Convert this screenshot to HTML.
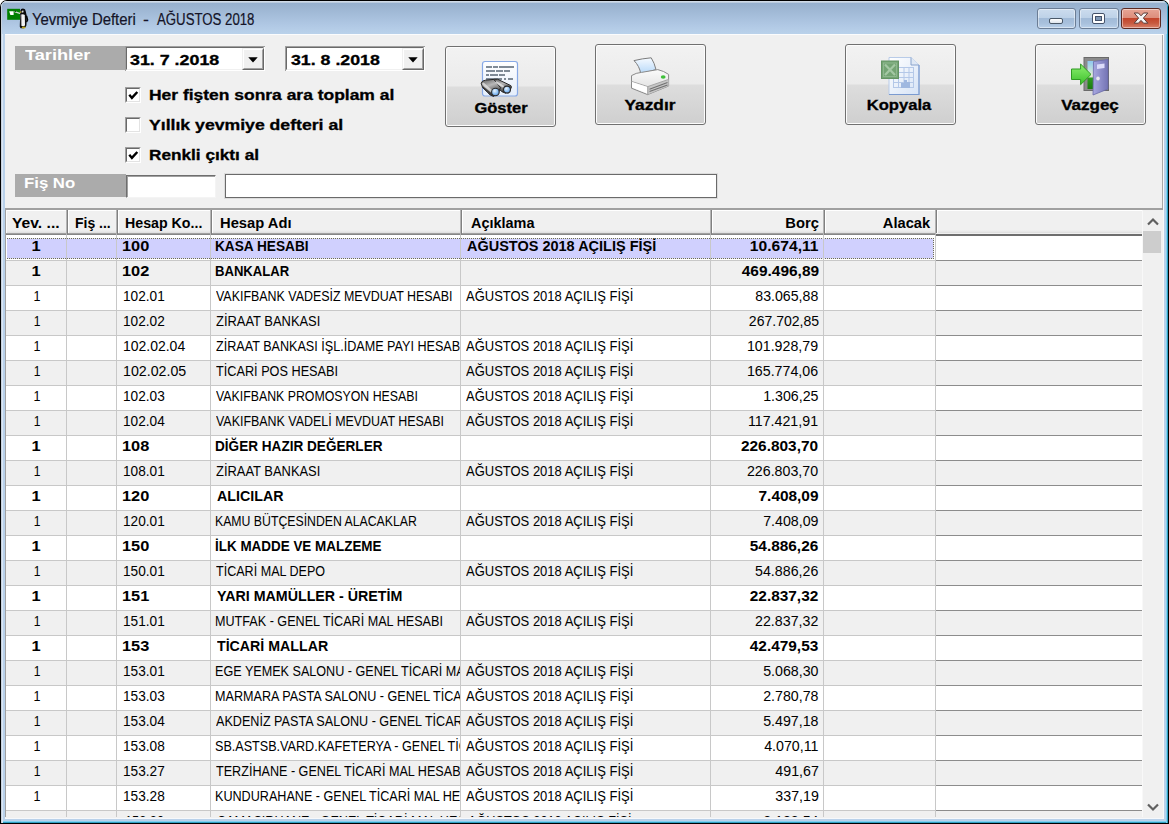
<!DOCTYPE html>
<html><head><meta charset="utf-8"><title>Yevmiye Defteri</title><style>
html,body{margin:0;padding:0}
body{width:1169px;height:824px;overflow:hidden;position:relative;background:#fff;font-family:"Liberation Sans",sans-serif}
.a{position:absolute}
.t{position:absolute;white-space:nowrap;line-height:20px;height:20px}
</style></head><body>
<div class="a" style="left:0px;top:0px;width:1169px;height:824px;background:#000;border-radius:7px 7px 0 0;"></div>
<div class="a" style="left:1px;top:1px;width:1167px;height:822px;background:#b9d1ea;border-radius:6px 6px 0 0;"></div>
<div class="a" style="left:1px;top:1px;width:1167px;height:822px;box-shadow:inset 1px 0 0 #c8d2de, inset 2px 0 0 #d9e6f5, inset -1px 0 0 #2f9fc3, inset -2px 0 0 #7fd0ef, inset 0 -1px 0 #2f9fc3, inset 0 -2px 0 #7fd0ef;border-radius:6px 6px 0 0;"></div>
<div class="a" style="left:2px;top:1px;width:1165px;height:33px;background:linear-gradient(#d3dde9 0px,#cdd9e6 1px,#97b1cf 2.5px,#9ab3d0 5px,#b0c8e4 24px,#b9d1ea 32px);border-radius:5px 5px 0 0;"></div>
<div class="a" style="left:5px;top:34px;width:1159px;height:784px;background:#f0f0f0;"></div>
<div class="a" style="left:5px;top:34px;width:1159px;height:1px;background:#fbfcfd;"></div>
<svg class="a" style="left:4px;top:6px" width="28" height="24" viewBox="0 0 28 24">
<rect x="3.2" y="2.8" width="12.8" height="11" fill="#008000"/>
<path d="M5.2 5.2 L9.6 5.2 L9.6 9 L6.4 9 Z" fill="#ffffff"/>
<path d="M10.5 5.6 L16.5 7.6" stroke="#cfd8cf" stroke-width="1.2"/>
<path d="M10.8 5.2 L12 5.6" stroke="#222" stroke-width="1"/>
<path d="M16.2 5 Q16.6 2.6 19 2.6 Q21.6 2.8 21.8 5.4 L22.4 8.2 Q23.4 10 22.8 13 L22.4 19.5 Q22 21.8 19.5 22.2 L16.6 22.2 Q15.4 21 15.8 19 L16.2 9.5 Z" fill="#0a0a0a"/>
<path d="M17.6 5.2 Q18.4 4 19.4 4.6 L19.6 6.2 L17.8 6.8 Z" fill="#d8d8d8"/>
<path d="M17.2 8.6 Q19.2 7.6 20.8 9 L21 19.6 Q19.2 20.6 17.4 19.8 Z" fill="#f2f2f2"/>
<path d="M17 9 L17.4 19.8" stroke="#9a9a9a" stroke-width="0.6"/>
<path d="M17.2 5.8 L16 6.4" stroke="#c8b420" stroke-width="1.2"/>
<path d="M22.6 10 L23.6 14 L22.6 16" stroke="#000" stroke-width="1.4" fill="none"/>
<ellipse cx="19.6" cy="21.4" rx="2" ry="1" fill="#b9a21e"/>
</svg>
<div class="t" style="font-size:16px;top:10px;color:#141428;-webkit-text-stroke:0.2px #141428;left:31.740000000000002px;transform-origin:0 0;transform:scaleX(0.9310);">Yevmiye Defteri</div>
<div class="t" style="font-size:16px;top:10px;color:#141428;-webkit-text-stroke:0.2px #141428;left:143.0px;transform-origin:0 0;transform:scaleX(1.1045);">-</div>
<div class="t" style="font-size:16px;top:10px;color:#141428;-webkit-text-stroke:0.2px #141428;left:156.54px;transform-origin:0 0;transform:scaleX(0.8261);">AĞUSTOS 2018</div>
<div class="a" style="left:1037px;top:8px;width:39px;height:21px;box-sizing:border-box;border:1px solid #6b7d95;border-radius:3px;background:linear-gradient(#ccdcee 0%,#bed2e8 45%,#a2bbd8 50%,#a8c0dc 75%,#b9d0ea 100%);box-shadow:inset 0 0 0 1px rgba(255,255,255,0.45)"></div>
<div class="a" style="left:1079px;top:8px;width:40px;height:21px;box-sizing:border-box;border:1px solid #6b7d95;border-radius:3px;background:linear-gradient(#ccdcee 0%,#bed2e8 45%,#a2bbd8 50%,#a8c0dc 75%,#b9d0ea 100%);box-shadow:inset 0 0 0 1px rgba(255,255,255,0.45)"></div>
<div class="a" style="left:1121px;top:8px;width:40px;height:21px;box-sizing:border-box;border:1px solid #5c2a22;border-radius:3px;background:linear-gradient(#e7a595 0%,#dd8f7c 45%,#c3452b 50%,#c75a40 75%,#d9816a 100%);box-shadow:inset 0 0 0 1px rgba(255,255,255,0.45)"></div>
<div class="a" style="left:1049px;top:18px;width:14px;height:6px;background:linear-gradient(#fff,#dfe6ee);border:1px solid #4a5868;border-radius:2px;box-sizing:border-box;"></div>
<div class="a" style="left:1092px;top:13px;width:13px;height:11px;background:#fff;border:1px solid #44526a;border-radius:2px;box-sizing:border-box;"></div>
<div class="a" style="left:1095px;top:16px;width:7px;height:5px;background:#8098b6;border:1px solid #44526a;box-sizing:border-box;"></div>
<svg class="a" style="left:1131px;top:10px" width="20" height="17" viewBox="0 0 20 17">
<path d="M3.2 3 L7.4 3 L10 5.8 L12.6 3 L16.8 3 L12.4 8.1 L16.8 13.2 L12.6 13.2 L10 10.4 L7.4 13.2 L3.2 13.2 L7.6 8.1 Z" fill="#f4f4f4" stroke="#5a3a36" stroke-width="1" stroke-linejoin="round"/>
</svg>
<div class="a" style="left:15px;top:46px;width:110px;height:24px;background:#ababab;"></div>
<div class="t" style="font-size:14px;top:45px;color:#fff;font-weight:bold;left:25.28px;transform-origin:0 0;transform:scaleX(1.2990);">Tarihler</div>
<div class="a" style="left:15px;top:174px;width:111px;height:23px;background:#ababab;"></div>
<div class="t" style="font-size:14px;top:173px;color:#fff;font-weight:bold;left:24.48px;transform-origin:0 0;transform:scaleX(1.1957);">Fiş No</div>
<div class="a" style="left:125px;top:46px;width:140px;height:25px;background:#fff;box-sizing:border-box;border-style:solid;border-width:2px;border-color:#8a8a8a #ffffff #ffffff #8a8a8a;"></div><div class="a" style="left:126px;top:47px;width:138px;height:23px;box-sizing:border-box;border-style:solid;border-width:1px;border-color:#6a6a6a #f0f0f0 #f0f0f0 #6a6a6a;"></div><div class="a" style="left:125px;top:46px;width:140px;height:1px;background:#a0a0a0;"></div><div class="a" style="left:125px;top:46px;width:1px;height:25px;background:#a0a0a0;"></div><div class="a" style="left:242px;top:48px;width:22px;height:22px;background:#f0f0f0;box-sizing:border-box;border-style:solid;border-width:1px;border-color:#f0f0f0 #696969 #696969 #f0f0f0;"></div><div class="a" style="left:243px;top:49px;width:20px;height:20px;box-sizing:border-box;border-style:solid;border-width:1px;border-color:#ffffff #a0a0a0 #a0a0a0 #ffffff;"></div><svg class="a" style="left:242px;top:48px" width="22" height="22"><path d="M6.3 9.2 L15.7 9.2 L11 14.6 Z" fill="#000"/></svg><div class="t" style="font-size:14px;top:50px;color:#000;font-weight:bold;-webkit-text-stroke:0.3px #000;left:130.28px;transform-origin:0 0;transform:scaleX(1.2736);">31. 7 .2018</div>
<div class="a" style="left:285px;top:46px;width:140px;height:25px;background:#fff;box-sizing:border-box;border-style:solid;border-width:2px;border-color:#8a8a8a #ffffff #ffffff #8a8a8a;"></div><div class="a" style="left:286px;top:47px;width:138px;height:23px;box-sizing:border-box;border-style:solid;border-width:1px;border-color:#6a6a6a #f0f0f0 #f0f0f0 #6a6a6a;"></div><div class="a" style="left:285px;top:46px;width:140px;height:1px;background:#a0a0a0;"></div><div class="a" style="left:285px;top:46px;width:1px;height:25px;background:#a0a0a0;"></div><div class="a" style="left:402px;top:48px;width:22px;height:22px;background:#f0f0f0;box-sizing:border-box;border-style:solid;border-width:1px;border-color:#f0f0f0 #696969 #696969 #f0f0f0;"></div><div class="a" style="left:403px;top:49px;width:20px;height:20px;box-sizing:border-box;border-style:solid;border-width:1px;border-color:#ffffff #a0a0a0 #a0a0a0 #ffffff;"></div><svg class="a" style="left:402px;top:48px" width="22" height="22"><path d="M6.3 9.2 L15.7 9.2 L11 14.6 Z" fill="#000"/></svg><div class="t" style="font-size:14px;top:50px;color:#000;font-weight:bold;-webkit-text-stroke:0.3px #000;left:290.52000000000004px;transform-origin:0 0;transform:scaleX(1.2678);">31. 8 .2018</div>
<div class="a" style="left:125px;top:87px;width:16px;height:16px;background:#fff;box-sizing:border-box;border-style:solid;border-width:1px;border-color:#a0a0a0 #ffffff #ffffff #a0a0a0;"></div><div class="a" style="left:126px;top:88px;width:14px;height:14px;box-sizing:border-box;border-style:solid;border-width:1px;border-color:#696969 #e3e3e3 #e3e3e3 #696969;"></div><svg class="a" style="left:125px;top:87px" width="16" height="16"><path d="M4.3 7.8 L6.9 10.9 L12.3 5.0" fill="none" stroke="#000" stroke-width="2.4"/></svg>
<div class="t" style="font-size:14px;top:85px;color:#000;font-weight:bold;-webkit-text-stroke:0.3px #000;left:149.2px;transform-origin:0 0;transform:scaleX(1.2460);">Her fişten sonra ara toplam al</div>
<div class="a" style="left:125px;top:117px;width:16px;height:16px;background:#fff;box-sizing:border-box;border-style:solid;border-width:1px;border-color:#a0a0a0 #ffffff #ffffff #a0a0a0;"></div><div class="a" style="left:126px;top:118px;width:14px;height:14px;box-sizing:border-box;border-style:solid;border-width:1px;border-color:#696969 #e3e3e3 #e3e3e3 #696969;"></div>
<div class="t" style="font-size:14px;top:115px;color:#000;font-weight:bold;-webkit-text-stroke:0.3px #000;left:149.2px;transform-origin:0 0;transform:scaleX(1.2598);">Yıllık yevmiye defteri al</div>
<div class="a" style="left:125px;top:147px;width:16px;height:16px;background:#fff;box-sizing:border-box;border-style:solid;border-width:1px;border-color:#a0a0a0 #ffffff #ffffff #a0a0a0;"></div><div class="a" style="left:126px;top:148px;width:14px;height:14px;box-sizing:border-box;border-style:solid;border-width:1px;border-color:#696969 #e3e3e3 #e3e3e3 #696969;"></div><svg class="a" style="left:125px;top:147px" width="16" height="16"><path d="M4.3 7.8 L6.9 10.9 L12.3 5.0" fill="none" stroke="#000" stroke-width="2.4"/></svg>
<div class="t" style="font-size:14px;top:145px;color:#000;font-weight:bold;-webkit-text-stroke:0.3px #000;left:149.2px;transform-origin:0 0;transform:scaleX(1.2291);">Renkli çıktı al</div>
<div class="a" style="left:126px;top:175px;width:90px;height:23px;background:#fff;box-sizing:border-box;border-style:solid;border-width:1px;border-color:#6e6e6e #f4f4f4 #f4f4f4 #6e6e6e;box-shadow:inset 1px 1px 0 #a0a0a0;"></div>
<div class="a" style="left:225px;top:174px;width:492px;height:24px;background:#fff;box-sizing:border-box;border:1px solid #6a6a6a;box-shadow:0 0 0 1px rgba(160,160,160,0.25);"></div>
<div class="a" style="left:445px;top:46px;width:111px;height:81px;box-sizing:border-box;border:1px solid #707070;border-radius:3px;background:linear-gradient(#f2f2f2 0%,#ebebeb 49%,#dddddd 51%,#cfcfcf 100%);box-shadow:inset 0 0 0 1px #fcfcfc;"></div><svg class="a" style="left:480px;top:59px" width="40" height="40" viewBox="0 0 40 40">
<defs><linearGradient id="gd" x1="0" y1="0" x2="0" y2="1"><stop offset="0" stop-color="#ffffff"/><stop offset="1" stop-color="#e4eefb"/></linearGradient>
<radialGradient id="ln" cx="0.4" cy="0.35" r="0.7"><stop offset="0" stop-color="#e8f4ff"/><stop offset="0.6" stop-color="#8cc0f4"/><stop offset="1" stop-color="#4f86d0"/></radialGradient>
<linearGradient id="bn2" x1="0" y1="0" x2="0.4" y2="1"><stop offset="0" stop-color="#5a5a5a"/><stop offset="0.45" stop-color="#b8b8b8"/><stop offset="1" stop-color="#3a3a3a"/></linearGradient></defs>
<rect x="2.5" y="2.5" width="35" height="34.5" rx="2.5" fill="url(#gd)" stroke="#87a9e6" stroke-width="1.2"/>
<g fill="#7f8a96"><rect x="6" y="7" width="6" height="2"/><rect x="13" y="7" width="5" height="2"/><rect x="19" y="7" width="15" height="2"/>
<rect x="6" y="11" width="9" height="2"/><rect x="16" y="11" width="7" height="2"/><rect x="24" y="11" width="6" height="2"/>
<rect x="6" y="15" width="3" height="2"/><rect x="10" y="15" width="8" height="2"/><rect x="19" y="15" width="6" height="2"/>
<rect x="6" y="19" width="16" height="2"/><rect x="24" y="19" width="2" height="2"/><rect x="28" y="19" width="5" height="2"/></g>
<path d="M12 21.6 Q14 19.6 17.5 20.2 L30.8 26.6 Q32.4 28 30.2 30.6 L25.6 34.2 Q21.5 33.2 19 30 Z" fill="url(#bn2)" stroke="#262626" stroke-width="1"/>
<path d="M1.2 24.2 Q1.8 21.6 5.5 21.2 L13.8 20.4 L20.5 28.6 L18.6 33.4 L13.6 37.4 Q10 36.8 7.6 33.4 L2.6 28.6 Z" fill="url(#bn2)" stroke="#262626" stroke-width="1"/>
<path d="M3.4 24.8 L13.4 33.8" stroke="#e0e0e0" stroke-width="2.4" stroke-linecap="round" opacity="0.8"/>
<path d="M16.4 23.4 L26.6 29.6" stroke="#e4e4e4" stroke-width="2.2" stroke-linecap="round" opacity="0.8"/>
<path d="M2.6 27.8 L12 36" stroke="#383838" stroke-width="1.4"/>
<circle cx="15.4" cy="33" r="3.8" fill="url(#ln)" stroke="#2a2a2a" stroke-width="1.1"/>
<circle cx="27" cy="30.6" r="3.5" fill="url(#ln)" stroke="#2a2a2a" stroke-width="1.1"/>
</svg><div class="t" style="font-size:14px;top:98px;color:#000;font-weight:bold;-webkit-text-stroke:0.3px #000;left:400.58px;width:200px;text-align:center;transform-origin:50% 0;transform:scaleX(1.1790);">Göster</div>
<div class="a" style="left:595px;top:44px;width:111px;height:81px;box-sizing:border-box;border:1px solid #707070;border-radius:3px;background:linear-gradient(#f2f2f2 0%,#ebebeb 49%,#dddddd 51%,#cfcfcf 100%);box-shadow:inset 0 0 0 1px #fcfcfc;"></div><svg class="a" style="left:628px;top:54px" width="44" height="44" viewBox="0 0 44 44">
<defs><linearGradient id="pp" x1="0" y1="0" x2="0" y2="1"><stop offset="0" stop-color="#f6faff"/><stop offset="1" stop-color="#b6d8f8"/></linearGradient>
<linearGradient id="pb" x1="0" y1="0" x2="0" y2="1"><stop offset="0" stop-color="#fbfbfb"/><stop offset="1" stop-color="#dadada"/></linearGradient></defs>
<path d="M6 6.6 Q14 4.6 23.2 3.8 Q26.5 9 28 15.6 L12.8 19.8 Q11.5 12 6 6.6 Z" fill="url(#pp)" stroke="#7c7c7c" stroke-width="1"/>
<path d="M3.5 21.6 Q8 18.8 13.4 18.4 L29.8 15.6 Q36 17 40.6 20.4 L40.6 32 L19.6 40.6 L3.5 34.2 Z" fill="url(#pb)" stroke="#8a8a8a" stroke-width="1"/>
<path d="M19.8 32.6 L40.6 25.4 L40.6 32 L19.8 40.4 Z" fill="#c6c6c6"/>
<path d="M3.5 27.4 L19.8 32.6 L40.6 25.4" stroke="#a6a6a6" stroke-width="1" fill="none"/>
<path d="M4 28 L19.4 33 L19.4 39.8 L4 33.6 Z" fill="#ffffff"/>
<path d="M21.5 35.2 L39.5 28.6 M21.5 37.6 L39.5 31" stroke="#707070" stroke-width="1.1"/>
<path d="M19.8 32.6 L19.8 40.5" stroke="#9a9a9a" stroke-width="1"/>
<ellipse cx="35.2" cy="23" rx="2.4" ry="1.7" fill="#3fc03a"/>
</svg><div class="t" style="font-size:14px;top:95px;color:#000;font-weight:bold;-webkit-text-stroke:0.3px #000;left:549.98px;width:200px;text-align:center;transform-origin:50% 0;transform:scaleX(1.2355);">Yazdır</div>
<div class="a" style="left:845px;top:44px;width:111px;height:81px;box-sizing:border-box;border:1px solid #707070;border-radius:3px;background:linear-gradient(#f2f2f2 0%,#ebebeb 49%,#dddddd 51%,#cfcfcf 100%);box-shadow:inset 0 0 0 1px #fcfcfc;"></div><svg class="a" style="left:878px;top:54px" width="44" height="44" viewBox="0 0 44 44">
<defs><linearGradient id="kd" x1="0" y1="0" x2="1" y2="1"><stop offset="0" stop-color="#ffffff"/><stop offset="1" stop-color="#d6e3f6"/></linearGradient></defs>
<path d="M11 3.5 L33 3.5 L41 11 L41 40.5 L11 40.5 Z" fill="url(#kd)" stroke="#b8cbe8" stroke-width="1"/>
<path d="M41 11 L41 40.5 L11 40.5" fill="none" stroke="#7b9bd0" stroke-width="1.2"/>
<path d="M33 3.5 L33 11 L41 11" fill="#dfe8f5" stroke="#8aa4cc" stroke-width="1"/>
<g stroke="#b4c8e8" stroke-width="1" fill="none">
<path d="M15 13.5 H36 M15 18.5 H36 M15 23.5 H36 M15 28.5 H36 M15 33.5 H36"/>
<path d="M15.5 13 V34 M20.5 13 V34 M26 13 V34 M31 13 V34 M35.5 13 V34"/></g>
<path d="M23 34 L23 29 L26 29 L26 26 L29 26 L29 28 L32 28 L32 34 Z" fill="#9fb8e0"/>
<rect x="3.5" y="7" width="17" height="17.5" fill="#74a474" stroke="#649464" stroke-width="1"/>
<path d="M7 10.5 L17 21 M17 10.5 L7 21" stroke="#a4c8a4" stroke-width="2.2"/>
<rect x="5.5" y="9" width="13" height="13.5" fill="none" stroke="#94bc94" stroke-width="0.8"/>
</svg><div class="t" style="font-size:14px;top:95px;color:#000;font-weight:bold;-webkit-text-stroke:0.3px #000;left:799.46px;width:200px;text-align:center;transform-origin:50% 0;transform:scaleX(1.1816);">Kopyala</div>
<div class="a" style="left:1035px;top:44px;width:111px;height:81px;box-sizing:border-box;border:1px solid #707070;border-radius:3px;background:linear-gradient(#f2f2f2 0%,#ebebeb 49%,#dddddd 51%,#cfcfcf 100%);box-shadow:inset 0 0 0 1px #fcfcfc;"></div><svg class="a" style="left:1068px;top:54px" width="44" height="44" viewBox="0 0 44 44">
<defs><linearGradient id="sky" x1="0" y1="0" x2="0" y2="1"><stop offset="0" stop-color="#8ec8f0"/><stop offset="0.55" stop-color="#e8f0d0"/><stop offset="0.62" stop-color="#2e9a20"/><stop offset="1" stop-color="#1c7a10"/></linearGradient>
<linearGradient id="dr" x1="0" y1="0" x2="1" y2="0"><stop offset="0" stop-color="#a8a8e0"/><stop offset="1" stop-color="#7474b4"/></linearGradient>
<linearGradient id="ar" x1="0" y1="0" x2="0" y2="1"><stop offset="0" stop-color="#8ef070"/><stop offset="1" stop-color="#3cc02c"/></linearGradient></defs>
<rect x="16" y="3.5" width="24.5" height="33" fill="#8a8a8a" stroke="#6a6a6a" stroke-width="1"/>
<rect x="19.5" y="7" width="8" height="28" fill="url(#sky)"/>
<path d="M25.5 7.5 L40 5.5 L40 35 L25 41 Z" fill="url(#dr)" stroke="#6a6aa8" stroke-width="0.8"/>
<path d="M29 10.5 L36.5 9.5 L36.5 14 L29 15 Z" fill="#dcdcfa"/>
<ellipse cx="30" cy="24.5" rx="1.8" ry="2" fill="#e8e8f0"/>
<path d="M3.5 15 L12.6 15 L12.6 10 L23 20.4 L12.6 30.7 L12.6 25.5 L3.5 25.5 Z" fill="url(#ar)" stroke="#2f9a22" stroke-width="1"/>
</svg><div class="t" style="font-size:14px;top:95px;color:#000;font-weight:bold;-webkit-text-stroke:0.3px #000;left:990.3800000000001px;width:200px;text-align:center;transform-origin:50% 0;transform:scaleX(1.2151);">Vazgeç</div>
<div class="a" style="left:5px;top:208px;width:1159px;height:610px;background:#f0f0f0;"></div>
<div class="a" style="left:0;top:0;width:1169px;height:824px;clip-path:inset(208px 6px 7px 5px)">
<div class="a" style="left:5px;top:208px;width:1159px;height:2px;background:#a0a0a0;"></div>
<div class="a" style="left:5px;top:208px;width:1px;height:610px;background:#a0a0a0;"></div>
<div class="a" style="left:6px;top:210px;width:1136px;height:23px;background:linear-gradient(#ffffff 0px,#ffffff 1px,#f0f0f0 1px,#f0f0f0 20px,#e6e6e6 22px,#dcdcdc 23px);"></div>
<div class="a" style="left:6px;top:210px;width:1px;height:23px;background:#fcfcfc;"></div>
<div class="a" style="left:6px;top:233px;width:930px;height:2px;background:linear-gradient(#a0a0a0 0px,#a0a0a0 1px,#858585 1px);"></div>
<div class="a" style="left:66px;top:210px;width:2px;height:25px;background:linear-gradient(90deg,#b4b4b4 0px,#b4b4b4 1px,#808080 1px);"></div>
<div class="a" style="left:68px;top:211px;width:1px;height:22px;background:#ffffff;"></div>
<div class="a" style="left:116px;top:210px;width:2px;height:25px;background:linear-gradient(90deg,#b4b4b4 0px,#b4b4b4 1px,#808080 1px);"></div>
<div class="a" style="left:118px;top:211px;width:1px;height:22px;background:#ffffff;"></div>
<div class="a" style="left:210px;top:210px;width:2px;height:25px;background:linear-gradient(90deg,#b4b4b4 0px,#b4b4b4 1px,#808080 1px);"></div>
<div class="a" style="left:212px;top:211px;width:1px;height:22px;background:#ffffff;"></div>
<div class="a" style="left:460px;top:210px;width:2px;height:25px;background:linear-gradient(90deg,#b4b4b4 0px,#b4b4b4 1px,#808080 1px);"></div>
<div class="a" style="left:462px;top:211px;width:1px;height:22px;background:#ffffff;"></div>
<div class="a" style="left:710px;top:210px;width:2px;height:25px;background:linear-gradient(90deg,#b4b4b4 0px,#b4b4b4 1px,#808080 1px);"></div>
<div class="a" style="left:712px;top:211px;width:1px;height:22px;background:#ffffff;"></div>
<div class="a" style="left:823px;top:210px;width:2px;height:25px;background:linear-gradient(90deg,#b4b4b4 0px,#b4b4b4 1px,#808080 1px);"></div>
<div class="a" style="left:825px;top:211px;width:1px;height:22px;background:#ffffff;"></div>
<div class="a" style="left:935px;top:210px;width:2px;height:25px;background:linear-gradient(90deg,#b4b4b4 0px,#b4b4b4 1px,#808080 1px);"></div>
<div class="a" style="left:937px;top:211px;width:1px;height:22px;background:#ffffff;"></div>
<div class="t" style="font-size:14px;top:213px;color:#000;font-weight:bold;left:11.940000000000001px;transform-origin:0 0;transform:scaleX(1.1182);">Yev. ...</div>
<div class="t" style="font-size:14px;top:213px;color:#000;font-weight:bold;left:75.12px;transform-origin:0 0;transform:scaleX(0.9965);">Fiş ...</div>
<div class="t" style="font-size:14px;top:213px;color:#000;font-weight:bold;left:125.47999999999999px;transform-origin:0 0;transform:scaleX(1.0148);">Hesap Ko...</div>
<div class="t" style="font-size:14px;top:213px;color:#000;font-weight:bold;left:219.56px;transform-origin:0 0;transform:scaleX(1.0526);">Hesap Adı</div>
<div class="t" style="font-size:14px;top:213px;color:#000;font-weight:bold;left:470.54px;transform-origin:0 0;transform:scaleX(1.0326);">Açıklama</div>
<div class="t" style="font-size:14px;top:213px;color:#000;font-weight:bold;right:350.5px;transform-origin:100% 0;transform:scaleX(1.0515);">Borç</div>
<div class="t" style="font-size:14px;top:213px;color:#000;font-weight:bold;right:238.5px;transform-origin:100% 0;transform:scaleX(1.0477);">Alacak</div>
<div class="a" style="left:6px;top:235px;width:1136px;height:25px;background:#ffffff;"></div>
<div class="a" style="left:7px;top:239px;width:926px;height:19px;background:#d0d0fe;"></div>
<div class="a" style="left:7px;top:238px;width:927px;height:1px;background:repeating-linear-gradient(90deg,#6a6a5a 0px,#6a6a5a 1px,#e8e8f0 1px,#e8e8f0 2px);"></div>
<div class="a" style="left:7px;top:258px;width:927px;height:1px;background:repeating-linear-gradient(90deg,#6a6a5a 0px,#6a6a5a 1px,#e8e8f0 1px,#e8e8f0 2px);"></div>
<div class="a" style="left:933px;top:238px;width:1px;height:21px;background:repeating-linear-gradient(180deg,#6a6a5a 0px,#6a6a5a 1px,#e8e8f0 1px,#e8e8f0 2px);"></div>
<div class="a" style="left:6px;top:260px;width:930px;height:1px;background:#c8c8c8;"></div>
<div class="a" style="left:936px;top:260px;width:206px;height:2px;background:#8c8c8c;"></div>
<div class="a" style="left:6px;top:261px;width:1136px;height:24px;background:#f0f0f0;"></div>
<div class="a" style="left:6px;top:285px;width:930px;height:1px;background:#c8c8c8;"></div>
<div class="a" style="left:936px;top:285px;width:206px;height:2px;background:#8c8c8c;"></div>
<div class="a" style="left:6px;top:286px;width:1136px;height:24px;background:#ffffff;"></div>
<div class="a" style="left:6px;top:310px;width:930px;height:1px;background:#c8c8c8;"></div>
<div class="a" style="left:936px;top:310px;width:206px;height:2px;background:#8c8c8c;"></div>
<div class="a" style="left:6px;top:311px;width:1136px;height:24px;background:#f0f0f0;"></div>
<div class="a" style="left:6px;top:335px;width:930px;height:1px;background:#c8c8c8;"></div>
<div class="a" style="left:936px;top:335px;width:206px;height:2px;background:#8c8c8c;"></div>
<div class="a" style="left:6px;top:336px;width:1136px;height:24px;background:#ffffff;"></div>
<div class="a" style="left:6px;top:360px;width:930px;height:1px;background:#c8c8c8;"></div>
<div class="a" style="left:936px;top:360px;width:206px;height:2px;background:#8c8c8c;"></div>
<div class="a" style="left:6px;top:361px;width:1136px;height:24px;background:#f0f0f0;"></div>
<div class="a" style="left:6px;top:385px;width:930px;height:1px;background:#c8c8c8;"></div>
<div class="a" style="left:936px;top:385px;width:206px;height:2px;background:#8c8c8c;"></div>
<div class="a" style="left:6px;top:386px;width:1136px;height:24px;background:#ffffff;"></div>
<div class="a" style="left:6px;top:410px;width:930px;height:1px;background:#c8c8c8;"></div>
<div class="a" style="left:936px;top:410px;width:206px;height:2px;background:#8c8c8c;"></div>
<div class="a" style="left:6px;top:411px;width:1136px;height:24px;background:#f0f0f0;"></div>
<div class="a" style="left:6px;top:435px;width:930px;height:1px;background:#c8c8c8;"></div>
<div class="a" style="left:936px;top:435px;width:206px;height:2px;background:#8c8c8c;"></div>
<div class="a" style="left:6px;top:436px;width:1136px;height:24px;background:#ffffff;"></div>
<div class="a" style="left:6px;top:460px;width:930px;height:1px;background:#c8c8c8;"></div>
<div class="a" style="left:936px;top:460px;width:206px;height:2px;background:#8c8c8c;"></div>
<div class="a" style="left:6px;top:461px;width:1136px;height:24px;background:#f0f0f0;"></div>
<div class="a" style="left:6px;top:485px;width:930px;height:1px;background:#c8c8c8;"></div>
<div class="a" style="left:936px;top:485px;width:206px;height:2px;background:#8c8c8c;"></div>
<div class="a" style="left:6px;top:486px;width:1136px;height:24px;background:#ffffff;"></div>
<div class="a" style="left:6px;top:510px;width:930px;height:1px;background:#c8c8c8;"></div>
<div class="a" style="left:936px;top:510px;width:206px;height:2px;background:#8c8c8c;"></div>
<div class="a" style="left:6px;top:511px;width:1136px;height:24px;background:#f0f0f0;"></div>
<div class="a" style="left:6px;top:535px;width:930px;height:1px;background:#c8c8c8;"></div>
<div class="a" style="left:936px;top:535px;width:206px;height:2px;background:#8c8c8c;"></div>
<div class="a" style="left:6px;top:536px;width:1136px;height:24px;background:#ffffff;"></div>
<div class="a" style="left:6px;top:560px;width:930px;height:1px;background:#c8c8c8;"></div>
<div class="a" style="left:936px;top:560px;width:206px;height:2px;background:#8c8c8c;"></div>
<div class="a" style="left:6px;top:561px;width:1136px;height:24px;background:#f0f0f0;"></div>
<div class="a" style="left:6px;top:585px;width:930px;height:1px;background:#c8c8c8;"></div>
<div class="a" style="left:936px;top:585px;width:206px;height:2px;background:#8c8c8c;"></div>
<div class="a" style="left:6px;top:586px;width:1136px;height:24px;background:#ffffff;"></div>
<div class="a" style="left:6px;top:610px;width:930px;height:1px;background:#c8c8c8;"></div>
<div class="a" style="left:936px;top:610px;width:206px;height:2px;background:#8c8c8c;"></div>
<div class="a" style="left:6px;top:611px;width:1136px;height:24px;background:#f0f0f0;"></div>
<div class="a" style="left:6px;top:635px;width:930px;height:1px;background:#c8c8c8;"></div>
<div class="a" style="left:936px;top:635px;width:206px;height:2px;background:#8c8c8c;"></div>
<div class="a" style="left:6px;top:636px;width:1136px;height:24px;background:#ffffff;"></div>
<div class="a" style="left:6px;top:660px;width:930px;height:1px;background:#c8c8c8;"></div>
<div class="a" style="left:936px;top:660px;width:206px;height:2px;background:#8c8c8c;"></div>
<div class="a" style="left:6px;top:661px;width:1136px;height:24px;background:#f0f0f0;"></div>
<div class="a" style="left:6px;top:685px;width:930px;height:1px;background:#c8c8c8;"></div>
<div class="a" style="left:936px;top:685px;width:206px;height:2px;background:#8c8c8c;"></div>
<div class="a" style="left:6px;top:686px;width:1136px;height:24px;background:#ffffff;"></div>
<div class="a" style="left:6px;top:710px;width:930px;height:1px;background:#c8c8c8;"></div>
<div class="a" style="left:936px;top:710px;width:206px;height:2px;background:#8c8c8c;"></div>
<div class="a" style="left:6px;top:711px;width:1136px;height:24px;background:#f0f0f0;"></div>
<div class="a" style="left:6px;top:735px;width:930px;height:1px;background:#c8c8c8;"></div>
<div class="a" style="left:936px;top:735px;width:206px;height:2px;background:#8c8c8c;"></div>
<div class="a" style="left:6px;top:736px;width:1136px;height:24px;background:#ffffff;"></div>
<div class="a" style="left:6px;top:760px;width:930px;height:1px;background:#c8c8c8;"></div>
<div class="a" style="left:936px;top:760px;width:206px;height:2px;background:#8c8c8c;"></div>
<div class="a" style="left:6px;top:761px;width:1136px;height:24px;background:#f0f0f0;"></div>
<div class="a" style="left:6px;top:785px;width:930px;height:1px;background:#c8c8c8;"></div>
<div class="a" style="left:936px;top:785px;width:206px;height:2px;background:#8c8c8c;"></div>
<div class="a" style="left:6px;top:786px;width:1136px;height:24px;background:#ffffff;"></div>
<div class="a" style="left:6px;top:810px;width:930px;height:1px;background:#c8c8c8;"></div>
<div class="a" style="left:936px;top:810px;width:206px;height:2px;background:#8c8c8c;"></div>
<div class="a" style="left:6px;top:811px;width:1136px;height:24px;background:#f0f0f0;"></div>
<div class="a" style="left:6px;top:835px;width:930px;height:1px;background:#c8c8c8;"></div>
<div class="a" style="left:936px;top:835px;width:206px;height:2px;background:#8c8c8c;"></div>
<div class="a" style="left:936px;top:233px;width:206px;height:1px;background:#f0f0f0;"></div>
<div class="a" style="left:936px;top:234px;width:206px;height:2px;background:#6e6e6e;"></div>
<div class="a" style="left:66px;top:235px;width:1px;height:583px;background:#c8c8c8;"></div>
<div class="a" style="left:116px;top:235px;width:1px;height:583px;background:#c8c8c8;"></div>
<div class="a" style="left:210px;top:235px;width:1px;height:583px;background:#c8c8c8;"></div>
<div class="a" style="left:460px;top:235px;width:1px;height:583px;background:#c8c8c8;"></div>
<div class="a" style="left:710px;top:235px;width:1px;height:583px;background:#c8c8c8;"></div>
<div class="a" style="left:823px;top:235px;width:1px;height:583px;background:#c8c8c8;"></div>
<div class="a" style="left:935px;top:235px;width:1px;height:583px;background:#c8c8c8;"></div>
<div class="a" style="left:1142px;top:210px;width:1px;height:608px;background:#f8f8f8;"></div>
<div class="t" style="font-size:14px;top:236px;color:#000;font-weight:bold;left:-64.47999999999999px;width:200px;text-align:center;transform-origin:50% 0;transform:scaleX(1.1781);">1</div>
<div class="a" style="left:117px;top:231px;width:93px;height:24px;overflow:hidden"><div class="t" style="font-size:14px;top:5px;color:#000;font-weight:bold;left:4.98px;transform-origin:0 0;transform:scaleX(1.1681);">100</div></div>
<div class="a" style="left:211px;top:231px;width:249px;height:24px;overflow:hidden"><div class="t" style="font-size:14px;top:5px;color:#000;font-weight:bold;left:4.180000000000011px;transform-origin:0 0;transform:scaleX(0.9760);">KASA HESABI</div></div>
<div class="t" style="font-size:14px;top:236px;color:#000;font-weight:bold;left:466.78000000000003px;transform-origin:0 0;transform:scaleX(1.0351);">AĞUSTOS 2018 AÇILIŞ FİŞİ</div>
<div class="t" style="font-size:14px;top:236px;color:#000;font-weight:bold;right:350.26px;transform-origin:100% 0;transform:scaleX(1.1162);">10.674,11</div>
<div class="t" style="font-size:14px;top:261px;color:#000;font-weight:bold;left:-64.47999999999999px;width:200px;text-align:center;transform-origin:50% 0;transform:scaleX(1.1781);">1</div>
<div class="a" style="left:117px;top:256px;width:93px;height:24px;overflow:hidden"><div class="t" style="font-size:14px;top:5px;color:#000;font-weight:bold;left:4.98px;transform-origin:0 0;transform:scaleX(1.1681);">102</div></div>
<div class="a" style="left:211px;top:256px;width:249px;height:24px;overflow:hidden"><div class="t" style="font-size:14px;top:5px;color:#000;font-weight:bold;left:4.180000000000011px;transform-origin:0 0;transform:scaleX(0.9353);">BANKALAR</div></div>
<div class="t" style="font-size:14px;top:261px;color:#000;font-weight:bold;right:350.26px;transform-origin:100% 0;transform:scaleX(1.1034);">469.496,89</div>
<div class="t" style="font-size:14px;top:286px;color:#000;left:-63.04px;width:200px;text-align:center;transform-origin:50% 0;transform:scaleX(0.8963);">1</div>
<div class="a" style="left:117px;top:281px;width:93px;height:24px;overflow:hidden"><div class="t" style="font-size:14px;top:5px;color:#000;left:5.54px;transform-origin:0 0;transform:scaleX(0.9742);">102.01</div></div>
<div class="a" style="left:211px;top:281px;width:249px;height:24px;overflow:hidden"><div class="t" style="font-size:14px;top:5px;color:#000;left:5.300000000000011px;transform-origin:0 0;transform:scaleX(0.8874);">VAKIFBANK VADESİZ MEVDUAT HESABI</div></div>
<div class="t" style="font-size:14px;top:286px;color:#000;left:466.38px;transform-origin:0 0;transform:scaleX(0.9279);">AĞUSTOS 2018 AÇILIŞ FİŞİ</div>
<div class="t" style="font-size:14px;top:286px;color:#000;right:350.26px;transform-origin:100% 0;transform:scaleX(1.0120);">83.065,88</div>
<div class="t" style="font-size:14px;top:311px;color:#000;left:-63.04px;width:200px;text-align:center;transform-origin:50% 0;transform:scaleX(0.8605);">1</div>
<div class="a" style="left:117px;top:306px;width:93px;height:24px;overflow:hidden"><div class="t" style="font-size:14px;top:5px;color:#000;left:5.54px;transform-origin:0 0;transform:scaleX(0.9742);">102.02</div></div>
<div class="a" style="left:211px;top:306px;width:249px;height:24px;overflow:hidden"><div class="t" style="font-size:14px;top:5px;color:#000;left:5.300000000000011px;transform-origin:0 0;transform:scaleX(0.9227);">ZİRAAT BANKASI</div></div>
<div class="t" style="font-size:14px;top:311px;color:#000;right:350.26px;transform-origin:100% 0;transform:scaleX(1.0025);">267.702,85</div>
<div class="t" style="font-size:14px;top:336px;color:#000;left:-63.04px;width:200px;text-align:center;transform-origin:50% 0;transform:scaleX(0.8963);">1</div>
<div class="a" style="left:117px;top:331px;width:93px;height:24px;overflow:hidden"><div class="t" style="font-size:14px;top:5px;color:#000;left:5.54px;transform-origin:0 0;transform:scaleX(0.9979);">102.02.04</div></div>
<div class="a" style="left:211px;top:331px;width:249px;height:24px;overflow:hidden"><div class="t" style="font-size:14px;top:5px;color:#000;left:5.300000000000011px;transform-origin:0 0;transform:scaleX(0.9000);">ZİRAAT BANKASI İŞL.İDAME PAYI HESABI</div></div>
<div class="t" style="font-size:14px;top:336px;color:#000;left:466.38px;transform-origin:0 0;transform:scaleX(0.9279);">AĞUSTOS 2018 AÇILIŞ FİŞİ</div>
<div class="t" style="font-size:14px;top:336px;color:#000;right:350.5px;transform-origin:100% 0;transform:scaleX(1.0150);">101.928,79</div>
<div class="t" style="font-size:14px;top:361px;color:#000;left:-63.04px;width:200px;text-align:center;transform-origin:50% 0;transform:scaleX(0.8605);">1</div>
<div class="a" style="left:117px;top:356px;width:93px;height:24px;overflow:hidden"><div class="t" style="font-size:14px;top:5px;color:#000;left:5.54px;transform-origin:0 0;transform:scaleX(1.0146);">102.02.05</div></div>
<div class="a" style="left:211px;top:356px;width:249px;height:24px;overflow:hidden"><div class="t" style="font-size:14px;top:5px;color:#000;left:5.300000000000011px;transform-origin:0 0;transform:scaleX(0.9068);">TİCARİ POS HESABI</div></div>
<div class="t" style="font-size:14px;top:361px;color:#000;left:466.38px;transform-origin:0 0;transform:scaleX(0.9279);">AĞUSTOS 2018 AÇILIŞ FİŞİ</div>
<div class="t" style="font-size:14px;top:361px;color:#000;right:350.5px;transform-origin:100% 0;transform:scaleX(1.0150);">165.774,06</div>
<div class="t" style="font-size:14px;top:386px;color:#000;left:-63.04px;width:200px;text-align:center;transform-origin:50% 0;transform:scaleX(0.8963);">1</div>
<div class="a" style="left:117px;top:381px;width:93px;height:24px;overflow:hidden"><div class="t" style="font-size:14px;top:5px;color:#000;left:5.54px;transform-origin:0 0;transform:scaleX(0.9742);">102.03</div></div>
<div class="a" style="left:211px;top:381px;width:249px;height:24px;overflow:hidden"><div class="t" style="font-size:14px;top:5px;color:#000;left:5.300000000000011px;transform-origin:0 0;transform:scaleX(0.8806);">VAKIFBANK PROMOSYON HESABI</div></div>
<div class="t" style="font-size:14px;top:386px;color:#000;left:466.38px;transform-origin:0 0;transform:scaleX(0.9279);">AĞUSTOS 2018 AÇILIŞ FİŞİ</div>
<div class="t" style="font-size:14px;top:386px;color:#000;right:350.5px;transform-origin:100% 0;transform:scaleX(1.0150);">1.306,25</div>
<div class="t" style="font-size:14px;top:411px;color:#000;left:-63.04px;width:200px;text-align:center;transform-origin:50% 0;transform:scaleX(0.8605);">1</div>
<div class="a" style="left:117px;top:406px;width:93px;height:24px;overflow:hidden"><div class="t" style="font-size:14px;top:5px;color:#000;left:5.54px;transform-origin:0 0;transform:scaleX(0.9742);">102.04</div></div>
<div class="a" style="left:211px;top:406px;width:249px;height:24px;overflow:hidden"><div class="t" style="font-size:14px;top:5px;color:#000;left:5.300000000000011px;transform-origin:0 0;transform:scaleX(0.8885);">VAKIFBANK VADELİ MEVDUAT HESABI</div></div>
<div class="t" style="font-size:14px;top:411px;color:#000;left:466.38px;transform-origin:0 0;transform:scaleX(0.9279);">AĞUSTOS 2018 AÇILIŞ FİŞİ</div>
<div class="t" style="font-size:14px;top:411px;color:#000;right:350.5px;transform-origin:100% 0;transform:scaleX(1.0150);">117.421,91</div>
<div class="t" style="font-size:14px;top:436px;color:#000;font-weight:bold;left:-64.47999999999999px;width:200px;text-align:center;transform-origin:50% 0;transform:scaleX(1.1781);">1</div>
<div class="a" style="left:117px;top:431px;width:93px;height:24px;overflow:hidden"><div class="t" style="font-size:14px;top:5px;color:#000;font-weight:bold;left:4.98px;transform-origin:0 0;transform:scaleX(1.1679);">108</div></div>
<div class="a" style="left:211px;top:431px;width:249px;height:24px;overflow:hidden"><div class="t" style="font-size:14px;top:5px;color:#000;font-weight:bold;left:4.180000000000011px;transform-origin:0 0;transform:scaleX(0.9701);">DİĞER HAZIR DEĞERLER</div></div>
<div class="t" style="font-size:14px;top:436px;color:#000;font-weight:bold;right:350.5px;transform-origin:100% 0;transform:scaleX(1.1000);">226.803,70</div>
<div class="t" style="font-size:14px;top:461px;color:#000;left:-63.04px;width:200px;text-align:center;transform-origin:50% 0;transform:scaleX(0.8605);">1</div>
<div class="a" style="left:117px;top:456px;width:93px;height:24px;overflow:hidden"><div class="t" style="font-size:14px;top:5px;color:#000;left:5.54px;transform-origin:0 0;transform:scaleX(0.9742);">108.01</div></div>
<div class="a" style="left:211px;top:456px;width:249px;height:24px;overflow:hidden"><div class="t" style="font-size:14px;top:5px;color:#000;left:5.300000000000011px;transform-origin:0 0;transform:scaleX(0.9227);">ZİRAAT BANKASI</div></div>
<div class="t" style="font-size:14px;top:461px;color:#000;left:466.38px;transform-origin:0 0;transform:scaleX(0.9279);">AĞUSTOS 2018 AÇILIŞ FİŞİ</div>
<div class="t" style="font-size:14px;top:461px;color:#000;right:350.5px;transform-origin:100% 0;transform:scaleX(1.0150);">226.803,70</div>
<div class="t" style="font-size:14px;top:486px;color:#000;font-weight:bold;left:-64.47999999999999px;width:200px;text-align:center;transform-origin:50% 0;transform:scaleX(1.1781);">1</div>
<div class="a" style="left:117px;top:481px;width:93px;height:24px;overflow:hidden"><div class="t" style="font-size:14px;top:5px;color:#000;font-weight:bold;left:4.98px;transform-origin:0 0;transform:scaleX(1.1681);">120</div></div>
<div class="a" style="left:211px;top:481px;width:249px;height:24px;overflow:hidden"><div class="t" style="font-size:14px;top:5px;color:#000;font-weight:bold;left:5.780000000000012px;transform-origin:0 0;transform:scaleX(1.0178);">ALICILAR</div></div>
<div class="t" style="font-size:14px;top:486px;color:#000;font-weight:bold;right:350.5px;transform-origin:100% 0;transform:scaleX(1.1000);">7.408,09</div>
<div class="t" style="font-size:14px;top:511px;color:#000;left:-63.04px;width:200px;text-align:center;transform-origin:50% 0;transform:scaleX(0.8605);">1</div>
<div class="a" style="left:117px;top:506px;width:93px;height:24px;overflow:hidden"><div class="t" style="font-size:14px;top:5px;color:#000;left:5.54px;transform-origin:0 0;transform:scaleX(0.9742);">120.01</div></div>
<div class="a" style="left:211px;top:506px;width:249px;height:24px;overflow:hidden"><div class="t" style="font-size:14px;top:5px;color:#000;left:3.7000000000000113px;transform-origin:0 0;transform:scaleX(0.8766);">KAMU BÜTÇESİNDEN ALACAKLAR</div></div>
<div class="t" style="font-size:14px;top:511px;color:#000;left:466.38px;transform-origin:0 0;transform:scaleX(0.9279);">AĞUSTOS 2018 AÇILIŞ FİŞİ</div>
<div class="t" style="font-size:14px;top:511px;color:#000;right:350.5px;transform-origin:100% 0;transform:scaleX(1.0150);">7.408,09</div>
<div class="t" style="font-size:14px;top:536px;color:#000;font-weight:bold;left:-64.47999999999999px;width:200px;text-align:center;transform-origin:50% 0;transform:scaleX(1.1781);">1</div>
<div class="a" style="left:117px;top:531px;width:93px;height:24px;overflow:hidden"><div class="t" style="font-size:14px;top:5px;color:#000;font-weight:bold;left:4.98px;transform-origin:0 0;transform:scaleX(1.1681);">150</div></div>
<div class="a" style="left:211px;top:531px;width:249px;height:24px;overflow:hidden"><div class="t" style="font-size:14px;top:5px;color:#000;font-weight:bold;left:4.180000000000011px;transform-origin:0 0;transform:scaleX(0.9600);">İLK MADDE VE MALZEME</div></div>
<div class="t" style="font-size:14px;top:536px;color:#000;font-weight:bold;right:350.5px;transform-origin:100% 0;transform:scaleX(1.1000);">54.886,26</div>
<div class="t" style="font-size:14px;top:561px;color:#000;left:-63.04px;width:200px;text-align:center;transform-origin:50% 0;transform:scaleX(0.8605);">1</div>
<div class="a" style="left:117px;top:556px;width:93px;height:24px;overflow:hidden"><div class="t" style="font-size:14px;top:5px;color:#000;left:5.54px;transform-origin:0 0;transform:scaleX(0.9742);">150.01</div></div>
<div class="a" style="left:211px;top:556px;width:249px;height:24px;overflow:hidden"><div class="t" style="font-size:14px;top:5px;color:#000;left:5.300000000000011px;transform-origin:0 0;transform:scaleX(0.8975);">TİCARİ MAL DEPO</div></div>
<div class="t" style="font-size:14px;top:561px;color:#000;left:466.38px;transform-origin:0 0;transform:scaleX(0.9279);">AĞUSTOS 2018 AÇILIŞ FİŞİ</div>
<div class="t" style="font-size:14px;top:561px;color:#000;right:350.5px;transform-origin:100% 0;transform:scaleX(1.0150);">54.886,26</div>
<div class="t" style="font-size:14px;top:586px;color:#000;font-weight:bold;left:-64.47999999999999px;width:200px;text-align:center;transform-origin:50% 0;transform:scaleX(1.1781);">1</div>
<div class="a" style="left:117px;top:581px;width:93px;height:24px;overflow:hidden"><div class="t" style="font-size:14px;top:5px;color:#000;font-weight:bold;left:4.98px;transform-origin:0 0;transform:scaleX(1.1679);">151</div></div>
<div class="a" style="left:211px;top:581px;width:249px;height:24px;overflow:hidden"><div class="t" style="font-size:14px;top:5px;color:#000;font-weight:bold;left:5.780000000000012px;transform-origin:0 0;transform:scaleX(1.0171);">YARI MAMÜLLER - ÜRETİM</div></div>
<div class="t" style="font-size:14px;top:586px;color:#000;font-weight:bold;right:350.5px;transform-origin:100% 0;transform:scaleX(1.1000);">22.837,32</div>
<div class="t" style="font-size:14px;top:611px;color:#000;left:-63.04px;width:200px;text-align:center;transform-origin:50% 0;transform:scaleX(0.8605);">1</div>
<div class="a" style="left:117px;top:606px;width:93px;height:24px;overflow:hidden"><div class="t" style="font-size:14px;top:5px;color:#000;left:5.54px;transform-origin:0 0;transform:scaleX(0.9742);">151.01</div></div>
<div class="a" style="left:211px;top:606px;width:249px;height:24px;overflow:hidden"><div class="t" style="font-size:14px;top:5px;color:#000;left:3.7000000000000113px;transform-origin:0 0;transform:scaleX(0.9005);">MUTFAK - GENEL TİCARİ MAL HESABI</div></div>
<div class="t" style="font-size:14px;top:611px;color:#000;left:466.38px;transform-origin:0 0;transform:scaleX(0.9279);">AĞUSTOS 2018 AÇILIŞ FİŞİ</div>
<div class="t" style="font-size:14px;top:611px;color:#000;right:350.5px;transform-origin:100% 0;transform:scaleX(1.0150);">22.837,32</div>
<div class="t" style="font-size:14px;top:636px;color:#000;font-weight:bold;left:-64.47999999999999px;width:200px;text-align:center;transform-origin:50% 0;transform:scaleX(1.1781);">1</div>
<div class="a" style="left:117px;top:631px;width:93px;height:24px;overflow:hidden"><div class="t" style="font-size:14px;top:5px;color:#000;font-weight:bold;left:4.98px;transform-origin:0 0;transform:scaleX(1.1681);">153</div></div>
<div class="a" style="left:211px;top:631px;width:249px;height:24px;overflow:hidden"><div class="t" style="font-size:14px;top:5px;color:#000;font-weight:bold;left:5.780000000000012px;transform-origin:0 0;transform:scaleX(1.0135);">TİCARİ MALLAR</div></div>
<div class="t" style="font-size:14px;top:636px;color:#000;font-weight:bold;right:350.5px;transform-origin:100% 0;transform:scaleX(1.1000);">42.479,53</div>
<div class="t" style="font-size:14px;top:661px;color:#000;left:-63.04px;width:200px;text-align:center;transform-origin:50% 0;transform:scaleX(0.8605);">1</div>
<div class="a" style="left:117px;top:656px;width:93px;height:24px;overflow:hidden"><div class="t" style="font-size:14px;top:5px;color:#000;left:5.54px;transform-origin:0 0;transform:scaleX(0.9742);">153.01</div></div>
<div class="a" style="left:211px;top:656px;width:249px;height:24px;overflow:hidden"><div class="t" style="font-size:14px;top:5px;color:#000;left:3.7000000000000113px;transform-origin:0 0;transform:scaleX(0.9000);">EGE YEMEK SALONU - GENEL TİCARİ MAL HESABI</div></div>
<div class="t" style="font-size:14px;top:661px;color:#000;left:466.38px;transform-origin:0 0;transform:scaleX(0.9279);">AĞUSTOS 2018 AÇILIŞ FİŞİ</div>
<div class="t" style="font-size:14px;top:661px;color:#000;right:350.5px;transform-origin:100% 0;transform:scaleX(1.0150);">5.068,30</div>
<div class="t" style="font-size:14px;top:686px;color:#000;left:-63.04px;width:200px;text-align:center;transform-origin:50% 0;transform:scaleX(0.8963);">1</div>
<div class="a" style="left:117px;top:681px;width:93px;height:24px;overflow:hidden"><div class="t" style="font-size:14px;top:5px;color:#000;left:5.54px;transform-origin:0 0;transform:scaleX(0.9742);">153.03</div></div>
<div class="a" style="left:211px;top:681px;width:249px;height:24px;overflow:hidden"><div class="t" style="font-size:14px;top:5px;color:#000;left:3.7000000000000113px;transform-origin:0 0;transform:scaleX(0.9000);">MARMARA PASTA SALONU - GENEL TİCARİ MAL HESABI</div></div>
<div class="t" style="font-size:14px;top:686px;color:#000;left:466.38px;transform-origin:0 0;transform:scaleX(0.9279);">AĞUSTOS 2018 AÇILIŞ FİŞİ</div>
<div class="t" style="font-size:14px;top:686px;color:#000;right:350.5px;transform-origin:100% 0;transform:scaleX(1.0150);">2.780,78</div>
<div class="t" style="font-size:14px;top:711px;color:#000;left:-63.04px;width:200px;text-align:center;transform-origin:50% 0;transform:scaleX(0.8605);">1</div>
<div class="a" style="left:117px;top:706px;width:93px;height:24px;overflow:hidden"><div class="t" style="font-size:14px;top:5px;color:#000;left:5.54px;transform-origin:0 0;transform:scaleX(0.9742);">153.04</div></div>
<div class="a" style="left:211px;top:706px;width:249px;height:24px;overflow:hidden"><div class="t" style="font-size:14px;top:5px;color:#000;left:5.300000000000011px;transform-origin:0 0;transform:scaleX(0.9000);">AKDENİZ PASTA SALONU - GENEL TİCARİ MAL HESABI</div></div>
<div class="t" style="font-size:14px;top:711px;color:#000;left:466.38px;transform-origin:0 0;transform:scaleX(0.9279);">AĞUSTOS 2018 AÇILIŞ FİŞİ</div>
<div class="t" style="font-size:14px;top:711px;color:#000;right:350.5px;transform-origin:100% 0;transform:scaleX(1.0150);">5.497,18</div>
<div class="t" style="font-size:14px;top:736px;color:#000;left:-63.04px;width:200px;text-align:center;transform-origin:50% 0;transform:scaleX(0.8963);">1</div>
<div class="a" style="left:117px;top:731px;width:93px;height:24px;overflow:hidden"><div class="t" style="font-size:14px;top:5px;color:#000;left:5.54px;transform-origin:0 0;transform:scaleX(0.9742);">153.08</div></div>
<div class="a" style="left:211px;top:731px;width:249px;height:24px;overflow:hidden"><div class="t" style="font-size:14px;top:5px;color:#000;left:3.7000000000000113px;transform-origin:0 0;transform:scaleX(0.9000);">SB.ASTSB.VARD.KAFETERYA - GENEL TİCARİ MAL HESABI</div></div>
<div class="t" style="font-size:14px;top:736px;color:#000;left:466.38px;transform-origin:0 0;transform:scaleX(0.9279);">AĞUSTOS 2018 AÇILIŞ FİŞİ</div>
<div class="t" style="font-size:14px;top:736px;color:#000;right:350.5px;transform-origin:100% 0;transform:scaleX(1.0150);">4.070,11</div>
<div class="t" style="font-size:14px;top:761px;color:#000;left:-63.04px;width:200px;text-align:center;transform-origin:50% 0;transform:scaleX(0.8605);">1</div>
<div class="a" style="left:117px;top:756px;width:93px;height:24px;overflow:hidden"><div class="t" style="font-size:14px;top:5px;color:#000;left:5.54px;transform-origin:0 0;transform:scaleX(0.9742);">153.27</div></div>
<div class="a" style="left:211px;top:756px;width:249px;height:24px;overflow:hidden"><div class="t" style="font-size:14px;top:5px;color:#000;left:5.300000000000011px;transform-origin:0 0;transform:scaleX(0.9000);">TERZİHANE - GENEL TİCARİ MAL HESABI</div></div>
<div class="t" style="font-size:14px;top:761px;color:#000;left:466.38px;transform-origin:0 0;transform:scaleX(0.9279);">AĞUSTOS 2018 AÇILIŞ FİŞİ</div>
<div class="t" style="font-size:14px;top:761px;color:#000;right:350.5px;transform-origin:100% 0;transform:scaleX(1.0150);">491,67</div>
<div class="t" style="font-size:14px;top:786px;color:#000;left:-63.04px;width:200px;text-align:center;transform-origin:50% 0;transform:scaleX(0.8963);">1</div>
<div class="a" style="left:117px;top:781px;width:93px;height:24px;overflow:hidden"><div class="t" style="font-size:14px;top:5px;color:#000;left:5.54px;transform-origin:0 0;transform:scaleX(0.9742);">153.28</div></div>
<div class="a" style="left:211px;top:781px;width:249px;height:24px;overflow:hidden"><div class="t" style="font-size:14px;top:5px;color:#000;left:3.7000000000000113px;transform-origin:0 0;transform:scaleX(0.9000);">KUNDURAHANE - GENEL TİCARİ MAL HESABI</div></div>
<div class="t" style="font-size:14px;top:786px;color:#000;left:466.38px;transform-origin:0 0;transform:scaleX(0.9279);">AĞUSTOS 2018 AÇILIŞ FİŞİ</div>
<div class="t" style="font-size:14px;top:786px;color:#000;right:350.5px;transform-origin:100% 0;transform:scaleX(1.0150);">337,19</div>
<div class="t" style="font-size:14px;top:811px;color:#000;left:-62.64px;width:200px;text-align:center;transform-origin:50% 0;transform:scaleX(0.0000);">1</div>
<div class="a" style="left:117px;top:806px;width:93px;height:24px;overflow:hidden"><div class="t" style="font-size:14px;top:5px;color:#000;left:7.9399999999999995px;transform-origin:0 0;transform:scaleX(0.9103);">153.30</div></div>
<div class="a" style="left:211px;top:806px;width:249px;height:24px;overflow:hidden"><div class="t" style="font-size:14px;top:5px;color:#000;left:6.100000000000011px;transform-origin:0 0;transform:scaleX(0.9000);">ÇAMAŞIRHANE - GENEL TİCARİ MAL HESABI</div></div>
<div class="t" style="font-size:14px;top:811px;color:#000;left:467.98px;transform-origin:0 0;transform:scaleX(0.9065);">AĞUSTOS 2018 AÇILIŞ FİŞİ</div>
<div class="t" style="font-size:14px;top:811px;color:#000;right:350.5px;transform-origin:100% 0;transform:scaleX(1.0150);">2.183,54</div>
<div class="a" style="left:1143px;top:210px;width:20px;height:608px;background:#f0f0f0;"></div>
<svg class="a" style="left:1146px;top:215px" width="14" height="12"><path d="M2 9.5 L7 4.5 L12 9.5" fill="none" stroke="#606060" stroke-width="2.2"/></svg>
<div class="a" style="left:1143px;top:231px;width:18px;height:22px;background:#cdcdcd;"></div>
<svg class="a" style="left:1146px;top:802px" width="14" height="12"><path d="M2 2.5 L7 7.5 L12 2.5" fill="none" stroke="#606060" stroke-width="2.2"/></svg>
</div>
<div class="a" style="left:1163px;top:34px;width:1px;height:784px;background:#f6f8fb;"></div>
<div class="a" style="left:1162px;top:35px;width:1px;height:173px;background:linear-gradient(90deg,#b0b0b0,#a0a0a0);"></div>
<div class="a" style="left:5px;top:818px;width:1159px;height:1px;background:#f6f8fb;"></div>
</body></html>
